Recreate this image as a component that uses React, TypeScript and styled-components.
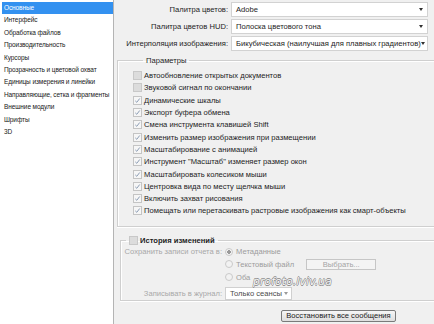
import styled, { createGlobalStyle } from "styled-components";

const GlobalStyle = createGlobalStyle`
  html, body {
    margin: 0;
    padding: 0;
    background: #f0f0f0;
  }
  body {
    font-family: "Liberation Sans", Arial, sans-serif;
    color: #1c1c1c;
  }
`;

const navItems = [
  "Основные",
  "Интерфейс",
  "Обработка файлов",
  "Производительность",
  "Курсоры",
  "Прозрачность и цветовой охват",
  "Единицы измерения и линейки",
  "Направляющие, сетка и фрагменты",
  "Внешние модули",
  "Шрифты",
  "3D",
];

const paletteRows = [
  { label: "Палитра цветов:", value: "Adobe" },
  { label: "Палитра цветов HUD:", value: "Полоска цветового тона" },
  { label: "Интерполяция изображения:", value: "Бикубическая (наилучшая для плавных градиентов)" },
];

const options = [
  { text: "Автообновление открытых документов", checked: false },
  { text: "Звуковой сигнал по окончании", checked: false },
  { text: "Динамические шкалы", checked: true },
  { text: "Экспорт буфера обмена", checked: true },
  { text: "Смена инструмента клавишей Shift", checked: true },
  { text: "Изменить размер изображения при размещении", checked: true },
  { text: "Масштабирование с анимацией", checked: true },
  { text: "Инструмент \"Масштаб\" изменяет размер окон", checked: true },
  { text: "Масштабировать колесиком мыши", checked: true },
  { text: "Центровка вида по месту щелчка мыши", checked: true },
  { text: "Включить захват рисования", checked: true },
  { text: "Помещать или перетаскивать растровые изображения как смарт-объекты", checked: true },
];

const Check = ({ checked }: { checked: boolean }) => (
  <CheckBox $checked={checked}>
    {checked && (
      <svg width="7" height="7" viewBox="0 0 7 7">
        <path d="M1.3 3.9 L2.8 5.3 L5.7 1.5" fill="none" stroke="#8093ad" strokeWidth="0.9" />
      </svg>
    )}
  </CheckBox>
);

const App = () => {
  return (
    <>
      <GlobalStyle />
      <Window>
        <Sidebar>
          {navItems.map((item, i) => (
            <NavItem key={item} $active={i === 0}>
              {item}
            </NavItem>
          ))}
        </Sidebar>
        <Main>
          <SelectGrid>
            {paletteRows.map((row) => (
              <SelectRow key={row.label}>
                <FieldLabel>{row.label}</FieldLabel>
                <Select>
                  <span>{row.value}</span>
                  <Arrow />
                </Select>
              </SelectRow>
            ))}
          </SelectGrid>

          <Group $left={3}>
            <Legend>Параметры</Legend>
            <OptionList>
              {options.map((opt) => (
                <OptionRow key={opt.text}>
                  <Check checked={opt.checked} />
                  <span>{opt.text}</span>
                </OptionRow>
              ))}
            </OptionList>
          </Group>

          <Group $left={6} $history>
            <Legend $tight>
              <LegendCheck>
                <Check checked={false} />
                <strong>История изменений</strong>
              </LegendCheck>
            </Legend>
            <HistoryGrid>
              <MutedLabel>Сохранить записи отчета в:</MutedLabel>
              <RadioRow>
                <Radio $selected />
                <RadioText>Метаданные</RadioText>
              </RadioRow>
              <span />
              <RadioRow>
                <Radio />
                <RadioText>Текстовый файл</RadioText>
                <GhostButton>Выбрать...</GhostButton>
              </RadioRow>
              <span />
              <RadioRow>
                <Radio />
                <RadioText>Оба</RadioText>
              </RadioRow>
              <MutedLabel $spaced>Записывать в журнал:</MutedLabel>
              <SmallSelectRow>
                <SmallSelect>
                  <span>Только сеансы</span>
                  <Arrow $muted />
                </SmallSelect>
              </SmallSelectRow>
            </HistoryGrid>
            <Watermark>profoto.lviv.ua</Watermark>
          </Group>

          <Footer>
            <ResetButton>Восстановить все сообщения</ResetButton>
          </Footer>
        </Main>
      </Window>
    </>
  );
};

const Window = styled.div`
  display: flex;
  width: 434px;
  height: 324px;
  overflow: hidden;
  background: #f0f0f0;
`;

const Sidebar = styled.div`
  width: 111px;
  flex-shrink: 0;
  padding: 2px 0 0 2px;
  background: #ffffff;
  border-right: 1px solid #b4b4b4;
`;

const NavItem = styled.div<{ $active?: boolean }>`
  height: 12.4px;
  line-height: 12.4px;
  padding-left: 2px;
  font-size: 6.5px;
  letter-spacing: -0.1px;
  white-space: nowrap;
  color: ${(p) => (p.$active ? "#ffffff" : "#202020")};
  background: ${(p) => (p.$active ? "#3391f0" : "transparent")};
`;

const Main = styled.div`
  flex: 1;
  position: relative;
  padding: 2px 0 0 0;
  font-size: 7.6px;
  overflow: hidden;
`;

const SelectGrid = styled.div`
  display: flex;
  flex-direction: column;
  gap: 2px;
`;

const SelectRow = styled.div`
  display: grid;
  grid-template-columns: 114px 197px;
  column-gap: 3px;
  align-items: center;
  height: 15px;
`;

const FieldLabel = styled.div`
  text-align: right;
  white-space: nowrap;
`;

const Select = styled.div`
  display: flex;
  align-items: center;
  justify-content: space-between;
  height: 15px;
  box-sizing: border-box;
  padding: 0 4px 0 4px;
  background: #ffffff;
  border: 1px solid #d2d2d2;
  white-space: nowrap;
`;

const Arrow = styled.i<{ $muted?: boolean }>`
  display: block;
  width: 0;
  height: 0;
  border-left: 2.5px solid transparent;
  border-right: 2.5px solid transparent;
  border-top: 3px solid ${(p) => (p.$muted ? "#9a9a9a" : "#303030")};
`;

const Group = styled.fieldset<{ $left: number; $history?: boolean }>`
  margin: ${(p) => (p.$history ? "8.5px" : "4.5px")} -20px 0 ${(p) => p.$left}px;
  padding: ${(p) => (p.$history ? "1px 0 0 0" : "5px 0 9px 15px")};
  border: 1px solid #cfcfcf;
  box-shadow: inset 1px 1px 0 #ffffff, 0 1px 0 #ffffff;
  position: relative;
  min-width: 0;
`;

const Legend = styled.legend<{ $tight?: boolean }>`
  margin-left: ${(p) => (p.$tight ? "5px" : "10px")};
  padding: 0 3px;
  font-size: 7.6px;
  line-height: 9px;
  height: 9px;
`;

const LegendCheck = styled.span`
  display: inline-flex;
  align-items: center;
  gap: 2px;
  height: 9px;

  strong {
    font-weight: bold;
  }
`;

const OptionList = styled.div`
  display: flex;
  flex-direction: column;
`;

const OptionRow = styled.div`
  display: flex;
  align-items: center;
  gap: 2px;
  height: 12.3px;
  white-space: nowrap;
`;

const CheckBox = styled.span<{ $checked: boolean }>`
  display: inline-flex;
  align-items: center;
  justify-content: center;
  width: 9px;
  height: 9px;
  box-sizing: border-box;
  flex-shrink: 0;
  border: 1px solid ${(p) => (p.$checked ? "#c4c4c4" : "#c8c8c8")};
  background: ${(p) => (p.$checked ? "#f6f6f6" : "#dcdcdc")};
`;

const HistoryGrid = styled.div`
  display: grid;
  grid-template-columns: 101px 1fr;
  column-gap: 3px;
  row-gap: 0;
  align-items: center;
`;

const MutedLabel = styled.div<{ $spaced?: boolean }>`
  text-align: right;
  white-space: nowrap;
  color: #a8a8a8;
  margin-top: ${(p) => (p.$spaced ? "3.5px" : "0")};
`;

const RadioRow = styled.div`
  display: flex;
  align-items: center;
  gap: 3px;
  height: 12.6px;
`;

const Radio = styled.span<{ $selected?: boolean }>`
  width: 8px;
  height: 8px;
  box-sizing: border-box;
  border-radius: 50%;
  border: 1px solid #cacaca;
  background: ${(p) =>
    p.$selected
      ? "radial-gradient(circle, #9a9a9a 0 1.6px, #f4f4f4 2px)"
      : "#f2f2f2"};
  flex-shrink: 0;
`;

const RadioText = styled.span`
  color: #9c9c9c;
  white-space: nowrap;
`;

const GhostButton = styled.span`
  margin-left: 9px;
  width: 70px;
  height: 11px;
  box-sizing: border-box;
  border: 1px solid #c6c6c6;
  background: #f4f4f4;
  color: #a4a4a4;
  display: flex;
  align-items: center;
  justify-content: center;
`;

const SmallSelectRow = styled.div`
  display: flex;
  margin-top: 3.5px;
`;

const SmallSelect = styled.div`
  display: flex;
  align-items: center;
  justify-content: space-between;
  width: 67px;
  height: 13px;
  box-sizing: border-box;
  padding: 0 3px 0 4px;
  border: 1px solid #d0d0d0;
  background: #ffffff;
  color: #4a4a4a;
  white-space: nowrap;
`;

const Watermark = styled.div`
  position: absolute;
  left: 132px;
  top: 31px;
  font-family: "DejaVu Sans", sans-serif;
  font-style: italic;
  font-size: 10.6px;
  line-height: 11px;
  letter-spacing: 0.2px;
  color: #f6f6f6;
  text-shadow: -0.6px 0 #8c8c8c, 0.6px 0 #8c8c8c, 0 -0.6px #8c8c8c, 0 0.6px #8c8c8c;
  pointer-events: none;
`;

const Footer = styled.div`
  display: flex;
  padding: 9px 0 0 167px;
`;

const ResetButton = styled.button`
  width: 115px;
  height: 12px;
  padding: 0;
  font-family: inherit;
  font-size: 7.6px;
  color: #1a1a1a;
  border: 1px solid #7a7a7a;
  border-radius: 2px;
  background: linear-gradient(#f6f6f6, #dedede);
  display: flex;
  align-items: center;
  justify-content: center;
`;

export default App;
